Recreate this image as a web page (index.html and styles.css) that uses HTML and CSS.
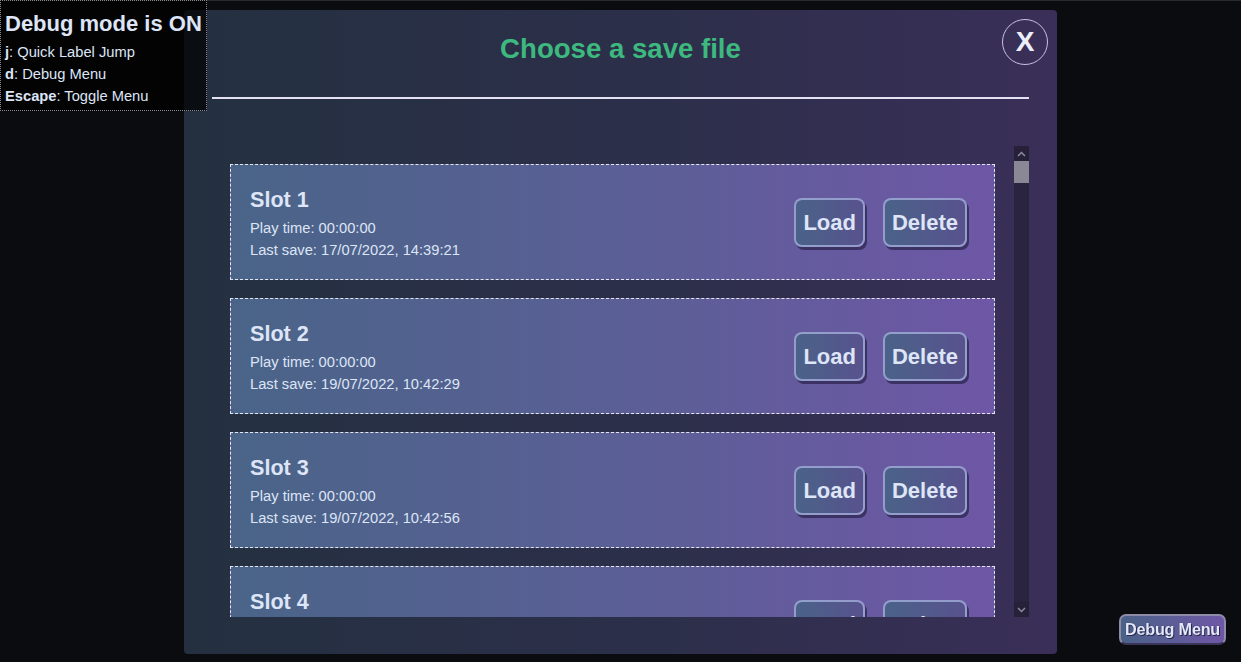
FILE: index.html
```html
<!DOCTYPE html>
<html lang="en">
<head>
<meta charset="utf-8">
<title>Choose a save file</title>
<link rel="stylesheet" href="styles.css">
</head>
<body>
<div class="debug-info">
  <div class="debug-title">Debug mode is ON</div>
  <div class="debug-line"><b>j</b>: Quick Label Jump</div>
  <div class="debug-line"><b>d</b>: Debug Menu</div>
  <div class="debug-line"><b>Escape</b>: Toggle Menu</div>
</div>

<div class="modal">
  <button class="close-btn">X</button>
  <h1 class="modal-title">Choose a save file</h1>
  <hr class="modal-rule">
  <div class="slot-area">
    <div class="slot-list" id="slots">
      <div class="slot">
        <div class="slot-info">
          <div class="slot-name">Slot 1</div>
          <div class="slot-meta">Play time: 00:00:00</div>
          <div class="slot-meta">Last save: 17/07/2022, 14:39:21</div>
        </div>
        <div class="slot-actions">
          <button class="btn">Load</button>
          <button class="btn">Delete</button>
        </div>
      </div>
      <div class="slot">
        <div class="slot-info">
          <div class="slot-name">Slot 2</div>
          <div class="slot-meta">Play time: 00:00:00</div>
          <div class="slot-meta">Last save: 19/07/2022, 10:42:29</div>
        </div>
        <div class="slot-actions">
          <button class="btn">Load</button>
          <button class="btn">Delete</button>
        </div>
      </div>
      <div class="slot">
        <div class="slot-info">
          <div class="slot-name">Slot 3</div>
          <div class="slot-meta">Play time: 00:00:00</div>
          <div class="slot-meta">Last save: 19/07/2022, 10:42:56</div>
        </div>
        <div class="slot-actions">
          <button class="btn">Load</button>
          <button class="btn">Delete</button>
        </div>
      </div>
      <div class="slot">
        <div class="slot-info">
          <div class="slot-name">Slot 4</div>
          <div class="slot-meta">Play time: 00:00:00</div>
          <div class="slot-meta">Last save: 19/07/2022, 10:43:12</div>
        </div>
        <div class="slot-actions">
          <button class="btn">Load</button>
          <button class="btn">Delete</button>
        </div>
      </div>
    </div>
    <div class="scrollbar">
      <div class="scroll-btn">
        <svg width="9" height="6" viewBox="0 0 9 6"><path d="M1 5 L4.5 1.5 L8 5" fill="none" stroke="#8c8a9c" stroke-width="1.5"/></svg>
      </div>
      <div class="scroll-track">
        <div class="scroll-thumb"></div>
      </div>
      <div class="scroll-btn">
        <svg width="9" height="6" viewBox="0 0 9 6"><path d="M1 1 L4.5 4.5 L8 1" fill="none" stroke="#8c8a9c" stroke-width="1.5"/></svg>
      </div>
    </div>
  </div>
</div>

<button class="debug-menu-btn">Debug Menu</button>
</body>
</html>
```

FILE: styles.css
```css
* { box-sizing: border-box; }
html, body { height: 100%; }
body {
  margin: 0;
  background: #0b0c10;
  border-top: 1px solid #2a2b31;
  font-family: "Liberation Sans", Arial, sans-serif;
  color: #dde5f6;
  display: flex;
  justify-content: center;
  align-items: flex-start;
  overflow: hidden;
}

.debug-info {
  position: absolute;
  top: 0;
  left: 0;
  width: 207px;
  height: 111px;
  padding: 6px 4px 0 4px;
  background: rgba(0, 0, 0, 0.72);
  border: 1px dotted #8a8a90;
  z-index: 5;
}
.debug-title {
  font-size: 22px;
  font-weight: bold;
  line-height: 34px;
}
.debug-line {
  font-size: 14.7px;
  line-height: 22px;
}

.modal {
  position: relative;
  margin-top: 9px;
  width: 873px;
  height: 644px;
  border-radius: 4px;
  background: linear-gradient(90deg, #243040 0%, #2c2f4a 55%, #3a2f58 100%);
  padding: 23px 28px 0 28px;
  display: flex;
  flex-direction: column;
}
.close-btn {
  position: absolute;
  top: 9px;
  right: 9px;
  width: 46px;
  height: 46px;
  border-radius: 50%;
  border: 1.5px solid #c9c1e2;
  background: transparent;
  color: #eceffa;
  font-family: "Liberation Sans", Arial, sans-serif;
  font-weight: bold;
  font-size: 28px;
  line-height: 1;
  padding: 0 0 1px 0;
  display: flex;
  align-items: center;
  justify-content: center;
}
.modal-title {
  margin: 0;
  text-align: center;
  color: #3db97f;
  font-size: 27.6px;
  line-height: 32px;
  font-weight: bold;
}
.modal-rule {
  margin: 32px 0 0 0;
  border: 0;
  height: 2px;
  background: #e4e2f2;
}
.slot-area {
  margin-top: 47px;
  height: 471px;
  display: flex;
}
.slot-list {
  flex: 1;
  overflow: hidden;
  padding: 18px 19px 0 18px;
}
.slot {
  height: 116px;
  margin-bottom: 18px;
  border: 1px dashed #e6e6f2;
  background: linear-gradient(90deg, #4a6488 0%, #5a5f95 50%, #6e57a6 100%);
  display: flex;
  align-items: center;
  justify-content: space-between;
  padding: 4px 27px 0 19px;
}
.slot-name {
  font-size: 21.6px;
  font-weight: bold;
  line-height: 25px;
  margin-bottom: 5px;
}
.slot-meta {
  font-size: 14.7px;
  line-height: 22px;
}
.slot-actions {
  display: flex;
  gap: 18px;
  margin-top: -3px;
}
.btn {
  font-family: "Liberation Sans", Arial, sans-serif;
  font-weight: bold;
  font-size: 22px;
  line-height: 25px;
  color: #dde5f6;
  padding: 10px 7px;
  border: 2px solid rgba(170, 180, 225, 0.75);
  border-radius: 8px;
  background: linear-gradient(90deg, #4a6288 0%, #58528e 100%);
  box-shadow: 2px 3px 0 #3b3163;
}

.scrollbar {
  width: 15px;
  display: flex;
  flex-direction: column;
  background: #2a2441;
}
.scroll-btn {
  height: 15px;
  display: flex;
  align-items: center;
  justify-content: center;
  background: #262038;
}
.scroll-track {
  flex: 1;
}
.scroll-thumb {
  height: 22px;
  background: #8b8896;
}

.debug-menu-btn {
  position: fixed;
  right: 15px;
  bottom: 17px;
  width: 107px;
  height: 31px;
  padding: 0;
  font-family: "Liberation Sans", Arial, sans-serif;
  font-weight: bold;
  font-size: 16.2px;
  letter-spacing: -0.2px;
  color: #e3e9f8;
  text-shadow: 0 0 1px #2a2450, 1px 1px 0 #2a2a50;
  border: 2px solid #8e8aa8;
  border-bottom-color: #3a3458;
  border-radius: 7px;
  background: linear-gradient(90deg, #4a6288 0%, #6f57a6 100%);
}
```
